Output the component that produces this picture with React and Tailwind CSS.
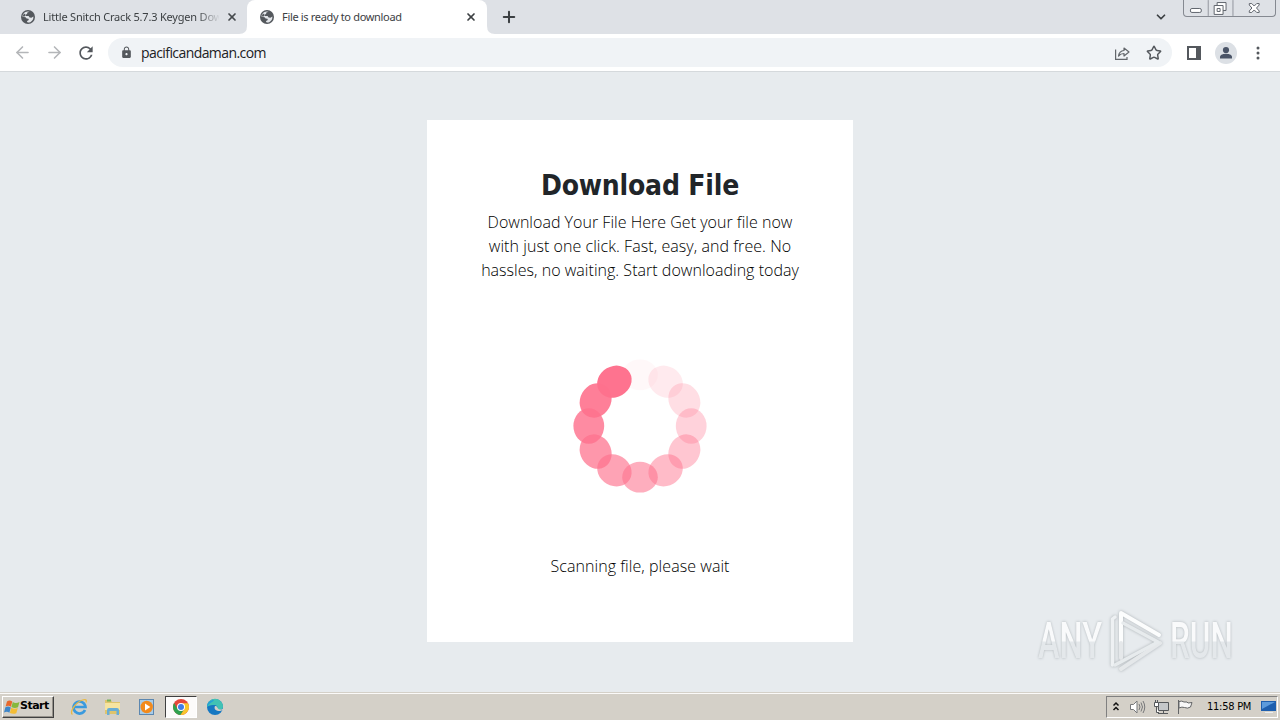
import { Star, ChevronDown, Plus, X, ArrowLeft, ArrowRight } from 'lucide-react';
import { MdLock, MdRefresh } from 'react-icons/md';

const petals = Array.from({ length: 12 }, (_, i) => ({ angle: i * 30, opacity: i === 0 ? 0.05 : (i + 0.8) / 12 }));

const GlobeIcon = ({ className }) => (
  <svg viewBox="0 0 14 14" className={className}>
    <circle cx="7" cy="7" r="7" fill="#54585d" />
    <path
      d="M8.6 1.7L6.3 2.6 6.1 3.9 4.9 4.6 5 5.9 7.6 6 8.6 7.4 10.4 7.7 12.4 6.4C12.6 9.8 10.2 12.5 7.1 12.5L6 12.1 6.2 11 7.8 10 7.5 8.8 5.600 8.500 4.600 7.200 1.500 6.800C1.500 4 3.500 1.700 6.600 1.500z"
      fill="#e3e6ea"
    />
    <path d="M1.500 7.200L4.800 10.500 4.600 12.100A6 6 0 0 1 1.500 7.200M3 3.500L5 5 3.500 6.500 1.500 6.500z" fill="#54585d" />
  </svg>
);

const Spinner = () => (
  <svg viewBox="-70 -70 140 140" className="block size-[140px]">
    {petals.map(({ angle, opacity }) => (
      <ellipse
        key={angle}
        cx="0"
        cy="-51.2"
        rx="17.8"
        ry="15.4"
        fill="#fe718d"
        fillOpacity={opacity}
        transform={`rotate(${angle})`}
      />
    ))}
  </svg>
);

const TabStrip = () => (
  <div className="flex h-[34px] bg-[#dee1e6] text-[11px] text-[#3c4043]">
    <div className="flex h-[34px] w-[247px] items-center pl-[21px]">
      <GlobeIcon className="size-[14px] shrink-0" />
      <div className="ml-2 w-[176px] whitespace-nowrap tracking-[-0.2px] [mask-image:linear-gradient(to_right,black_155px,transparent_177px)]">
        Little Snitch Crack 5.7.3 Keygen Dow
      </div>
      <X size={12} strokeWidth={3.4} className="ml-[7px] text-[#45494d]" />
    </div>
    <div className="relative flex h-[34px] w-[240px] items-center rounded-t-lg bg-white pl-[13px]">
      <svg viewBox="0 0 8 8" className="absolute bottom-0 -left-2 size-2">
        <path d="M8 0V8H0Q8 8 8 0" fill="#fff" />
      </svg>
      <svg viewBox="0 0 8 8" className="absolute -right-2 bottom-0 size-2">
        <path d="M0 0V8H8Q0 8 0 0" fill="#fff" />
      </svg>
      <GlobeIcon className="size-[14px] shrink-0" />
      <div className="ml-2 w-[176px] whitespace-nowrap tracking-[-0.33px]">File is ready to download</div>
      <X size={12} strokeWidth={3.4} className="ml-[7px]" />
    </div>
    <Plus size={18} strokeWidth={2.7} className="mt-2 ml-[13px]" />
    <ChevronDown size={14} strokeWidth={3} className="mt-[10px] ml-auto" />
    <div className="mr-1 ml-[15px] flex h-[17px] w-[93px] rounded-b-[4px] border border-t-0 border-[#858991]">
      <svg viewBox="0 0 92 16" className="h-4 w-full" fill="none" stroke="#5f646c">
        <path d="M24.500 0V16M49.500 0V16" stroke="#92969e" />
        <rect x="6.500" y="8.500" width="11" height="4" rx="1.500" fill="#fff" />
        <path d="M33.500 2.500h9v8h-9z" fill="#fff" />
        <path d="M30.500 5.500h9v9h-9z" fill="#fff" />
        <path d="M33.500 8.500h3v3h-3z" />
        <path
          d="M66 3.500h2.500L71 6l2.500-2.500H76V5L73.300 8 76 11v1.500h-2.500L71 10l-2.500 2.500H66V11l2.700-3L66 5z"
          fill="#fff"
        />
      </svg>
    </div>
  </div>
);

const Toolbar = () => (
  <div className="flex h-[38px] items-center border-b border-[#d5d9dc] bg-white pl-[13px] text-[#54585d]">
    <ArrowLeft size={19} strokeWidth={2} className="text-[#b4b6b9]" />
    <ArrowRight size={19} strokeWidth={2} className="ml-[13px] text-[#b4b6b9]" />
    <MdRefresh size={20} className="ml-3" />
    <div className="ml-3 flex h-[29px] w-[1064px] items-center rounded-full bg-[#f0f3f6] pl-3">
      <MdLock size={13} />
      <span className="ml-2 font-['Open_Sans',sans-serif] text-[14px] tracking-[-0.58px] text-[#202124]">pacificandaman.com</span>
      <svg viewBox="0 0 16 16" className="ml-auto size-4" fill="none" stroke="#62666b" strokeWidth="1.200">
        <path d="M1.600 4.500V14.300H13V12" />
        <path d="M4.500 11C5 7.400 7 5.700 10 5.500V3L15 7l-5 4V8.500C7.500 8.500 6 9.200 4.500 11z" strokeLinejoin="round" />
      </svg>
      <Star size={16} strokeWidth={2.2} className="mr-[10px] ml-4" />
    </div>
    <svg viewBox="0 0 14 14" className="ml-[15px] h-[14px] w-[14px]">
      <path d="M0 0h14v14H0zM2 2v10h7V2z" fill="#54585d" fillRule="evenodd" />
    </svg>
    <svg viewBox="0 0 22 22" className="ml-[14px] size-[22px]">
      <circle cx="11" cy="11" r="11" fill="#dce0e5" />
      <circle cx="11" cy="8" r="3.100" fill="#4a5467" />
      <path d="M5 16.500V15c0-2.500 4-3.200 6-3.200s6 .7 6 3.200v1.500z" fill="#4a5467" />
    </svg>
    <svg viewBox="0 0 4 14" className="ml-[19px] h-[14px] w-1" fill="#54585d">
      <circle cx="2" cy="2" r="1.500" />
      <circle cx="2" cy="7" r="1.500" />
      <circle cx="2" cy="12" r="1.500" />
    </svg>
  </div>
);

const Watermark = () => (
  <div className="absolute top-[537px] left-[1038px] flex h-[64px] w-[196px] items-center justify-between font-['Roboto',sans-serif] text-[50px] leading-none font-medium">
    <span className="w-[66px] whitespace-nowrap">
      <span className="block w-max origin-left scale-x-[0.65] bg-linear-to-b from-[#f9fafb] from-50% to-[#e4e8eb] to-52% bg-clip-text text-transparent drop-shadow-[0_0_1.5px_#b0b6ba]">
        ANY
      </span>
    </span>
    <svg viewBox="0 0 56 64" className="h-16 w-14 drop-shadow-[0_0_1.5px_#a9afb3]" fill="none" strokeLinecap="round" strokeLinejoin="round">
      <path d="M3.500 56V10L6 8" stroke="#eef1f3" strokeWidth="3.500" />
      <path d="M12 47V4L50 26" stroke="#fcfdfd" strokeWidth="4" />
      <path d="M12 60L51 34" stroke="#e5e8ea" strokeWidth="4" />
      <path d="M14 14L49 33L6 56" stroke="#e7ebed" strokeWidth="3.500" />
      <path d="M12 34V49" stroke="#e5e8ea" strokeWidth="4" />
    </svg>
    <span className="w-[64px] whitespace-nowrap">
      <span className="block w-max origin-left scale-x-[0.63] bg-linear-to-b from-[#f9fafb] from-50% to-[#e4e8eb] to-52% bg-clip-text text-transparent drop-shadow-[0_0_1.5px_#b0b6ba]">
        RUN
      </span>
    </span>
  </div>
);

const WindowsFlag = () => (
  <svg viewBox="0 0 16 16" className="h-4 w-4 shrink-0">
    <path d="M3 2.500Q5.500.5 8.300 2.500L6.900 7.700Q4.500 6 1.600 7.500z" fill="#e8682c" />
    <path d="M8.800 3Q11.500 5 15.500 3L14 8.300Q10.500 9.800 7.400 8z" fill="#86b83c" />
    <path d="M1.400 8.300Q4.200 6.800 6.800 8.500L5.400 13.700Q3 12 0 13.500z" fill="#3e86c9" />
    <path d="M7.200 8.800Q10.500 10.500 13.800 9L12.300 14.200Q9 15.500 5.900 14z" fill="#f4bd35" />
  </svg>
);

const IeIcon = () => (
  <svg viewBox="0 0 18 18" className="size-[18px]" fill="none">
    <path d="M15 12A6 6 0 1 1 15.500 9H5" stroke="#3a9ade" strokeWidth="2.700" />
    <path d="M2.500 16.300C-1 15 5 4.500 12.500 2q5-1.500 3.500 2.500" stroke="#e9b944" strokeWidth="1.300" />
  </svg>
);

const FolderIcon = () => (
  <svg viewBox="0 0 18 18" className="size-[18px]">
    <path d="M1 2h6l1 2h8v12H1z" fill="#dfc46c" />
    <path d="M3 1.500h4v2H3z" fill="#76b35b" />
    <path d="M1 5h15v7H1z" fill="#f6e4a0" />
    <path d="M3 17v-5q0-2 2-2h8q2 0 2 2v5h-2.500v-4h-7v4z" fill="#68add5" />
  </svg>
);

const PlayerIcon = () => (
  <svg viewBox="0 0 18 18" className="size-[18px]">
    <rect x="1.500" y="1.500" width="14" height="15" fill="#a8cce8" stroke="#5c87b0" />
    <circle cx="8.700" cy="9" r="6.200" fill="#f28a1c" />
    <path d="M7 5.500v7L12.300 9z" fill="#fff" />
  </svg>
);

const ChromeIcon = () => (
  <svg viewBox="0 0 18 18" className="size-[18px]">
    <circle cx="9" cy="9" r="8" fill="#e5483b" />
    <path d="M2.100 5A8 8 0 0 0 8.500 17L12.400 11 9 9 5.500 11z" fill="#2fa24f" />
    <path d="M16 5.200A8 8 0 0 1 8.500 17L12.500 11 11 5.200z" fill="#f8c62b" />
    <circle cx="9" cy="9" r="4" fill="#fff" />
    <circle cx="9" cy="9" r="3" fill="#3f7de8" />
  </svg>
);

const EdgeIcon = () => (
  <svg viewBox="0 0 18 18" className="size-[18px]">
    <circle cx="9" cy="9" r="8" fill="#1678c2" />
    <path d="M1 9a8 8 0 0 1 16-.5c0 3-3 4-6 3 2-3-1-5-4-4.500C4 7 2 8 1 9z" fill="#41c2b4" />
    <path d="M1 9C1 4 5 2 8 2c-1 2-5 3-7 7" fill="#24a0d8" />
    <path d="M9 8c-1.500 3 1 5 5 5l3-1 1-2c-2 2-5 2-6 .500C11.500 9 10.500 7.500 9 8z" fill="#d4d0c8" />
  </svg>
);

const Taskbar = () => (
  <div className="flex h-[28px] items-center border-t border-[#d4d0c8] bg-[#d4d0c8] font-['DejaVu_Sans_Condensed','DejaVu_Sans',sans-serif] text-[11px] text-black shadow-[inset_0_1px_#fbfaf9]">
    <div className="ml-0.5 flex h-[22px] w-[52px] items-center border border-t-white border-r-[#404040] border-b-[#404040] border-l-white pl-px shadow-[inset_-1px_-1px_#96928b]">
      <WindowsFlag />
      <span className="font-['DejaVu_Sans',sans-serif] text-[11px] font-bold tracking-[-0.5px]">Start</span>
    </div>
    <div className="ml-[16px] flex items-center">
      <IeIcon />
      <div className="ml-4"><FolderIcon /></div>
      <div className="ml-4"><PlayerIcon /></div>
      <div className="ml-[9px] flex h-[22px] w-8 items-center justify-center border border-t-[#404040] border-r-white border-b-white border-l-[#404040] bg-[#fcfbfa]">
        <ChromeIcon />
      </div>
      <div className="ml-[9px]"><EdgeIcon /></div>
    </div>
    <div className="mr-[2px] ml-auto flex h-[22px] w-[172px] items-center border border-t-[#808080] border-r-white border-b-white border-l-[#808080] pl-[5px]">
      <svg viewBox="0 0 8 12" className="h-3 w-2" fill="none" stroke="#111" strokeWidth="1.500">
        <path d="M1.500 4.500L4 2l2.500 2.500M1.500 9L4 6.500 6.500 9" />
      </svg>
      <svg viewBox="0 0 18 16" className="ml-[9px] h-4 w-[18px]" fill="none" stroke="#77787a">
        <path d="M1.500 5.500h3L8 2v12l-3.500-3.500h-3z" fill="#fff" />
        <path d="M10 5q2 3 0 6M12 3.500q3 4.500 0 9M14 2q3.500 6 0 12" />
      </svg>
      <svg viewBox="0 0 17 16" className="ml-[6px] h-4 w-[17px]" fill="none" stroke="#55585b">
        <path d="M5.500 3.500h10v8h-10z" fill="#c5c8ca" />
        <path d="M5 14.500h10M10.500 12v2" />
        <path d="M1.500 3.500h4v4h-4zM2.500 1v2M4.500 1v2M3.500 8v5.500H6" fill="#fff" />
      </svg>
      <svg viewBox="0 0 17 16" className="ml-[7px] h-4 w-[17px]" fill="#f8f8f8" stroke="#626466">
        <path d="M1.500 1v14M2 2.500q3-1 5 .500h3l1 1 4-.500-1.500 4.500q-3 2-6 .500Q5 7.500 2 9z" />
      </svg>
      <span className="ml-[13px] w-[46px] pt-[2px] whitespace-nowrap tracking-[-0.25px]">11:58 PM</span>
      <svg viewBox="0 0 16 14" className="ml-[8px] h-[14px] w-4">
        <path d="M0 1h15v10H0z" fill="#1e5fae" />
        <path d="M1 2h13L1 9z" fill="#5c9bdc" />
        <path d="M4 12h8v1H4z" fill="#e9edf1" />
      </svg>
    </div>
  </div>
);

const App = () => {
  return (
    <div className="flex h-[720px] w-[1280px] flex-col overflow-hidden bg-[#e7ebee]">
      <div className="font-['Noto_Sans',sans-serif]">
        <TabStrip />
        <Toolbar />
      </div>
      <main className="relative flex flex-1 justify-center pt-12">
        <section className="flex h-[522px] w-[426px] flex-col items-center bg-white pt-12 text-center text-[#212529]">
          <h1 className="font-['DejaVu_Sans_Condensed','DejaVu_Sans',sans-serif] text-[28px] leading-9 font-bold tracking-[-0.2px]">
            Download File
          </h1>
          <p className="mt-1.5 font-['Open_Sans',sans-serif] text-base leading-6 font-light whitespace-nowrap text-black">
            <span className="block tracking-[0.02px]">Download Your File Here Get your file now</span>
            <span className="block tracking-[0.06px]">with just one click. Fast, easy, and free. No</span>
            <span className="block tracking-[0.03px]">hassles, no waiting. Start downloading today</span>
          </p>
          <div className="mt-[74px]">
            <Spinner />
          </div>
          <p className="mt-[58px] font-['Open_Sans',sans-serif] text-base leading-6 font-light tracking-[0.06px] text-black">
            Scanning file, please wait
          </p>
        </section>
        <Watermark />
      </main>
      <Taskbar />
    </div>
  );
};

export default App;
